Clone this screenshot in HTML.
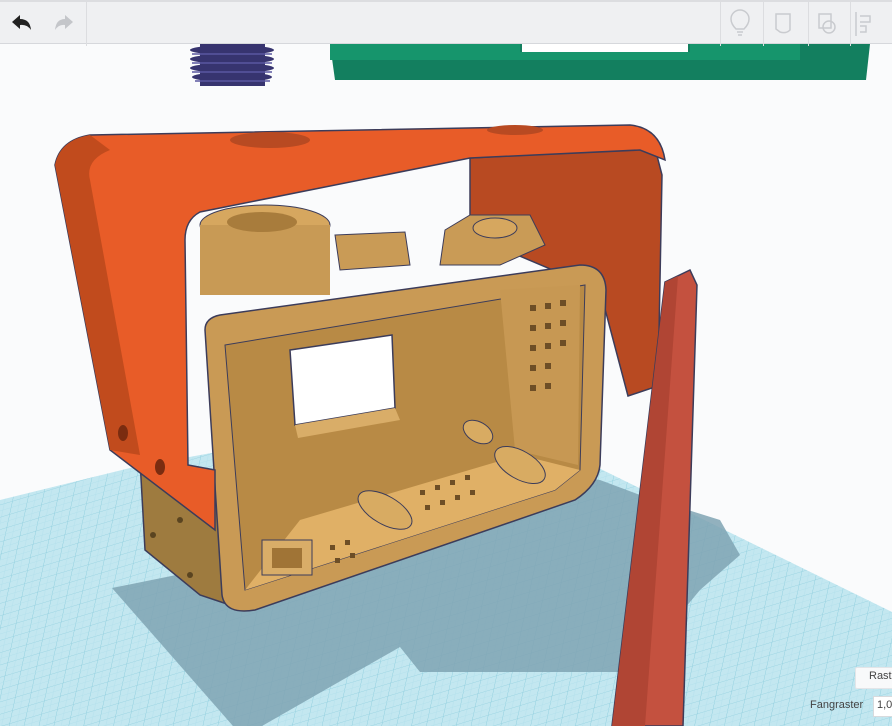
<!DOCTYPE html>
<html><head><meta charset="utf-8"><style>
html,body{margin:0;padding:0;width:892px;height:726px;overflow:hidden;background:#fafbfc;font-family:"Liberation Sans",sans-serif}
#tb{position:absolute;left:0;top:0;width:892px;height:44px;background:#eff0f2;border-top:2px solid #dcdde0;border-bottom:1px solid #d6d8dc;box-sizing:border-box}
.div{position:absolute;top:0;width:1px;height:44px;background:#dcdde0}
svg{position:absolute;left:0;top:0}
.lbl{position:absolute;font-size:11px;color:#444}
</style></head><body>
<svg width="892" height="726" viewBox="0 0 892 726">
<defs>
<pattern id="g" width="14" height="14" patternUnits="userSpaceOnUse" patternTransform="skewX(-30) rotate(-20)">
<rect width="14" height="14" fill="#c3e7f0"/><path d="M0 0H14M0 0V14" stroke="#8ccddd" stroke-width="0.8"/>
<path d="M0 7H14M7 0V14" stroke="#b0dfea" stroke-width="0.4"/></pattern>
</defs>
<polygon points="0,500 130,468 470,405 892,612 892,726 0,726" fill="url(#g)"/>
<!-- shadow -->
<polygon points="112,588 233,726 262,726 400,647 420,672 620,672 650,650 700,590 740,555 720,520 640,495 600,480 530,470 400,520 250,560" fill="#7fa3b3" opacity="0.85"/>
<!-- green piece -->
<polygon points="330,44 870,44 866,80 335,80" fill="#137f5f"/>
<polygon points="330,44 520,44 520,52 690,52 690,44 800,44 800,60 330,60" fill="#16956c"/>
<rect x="522" y="44" width="166" height="8" fill="#fff"/>
<!-- screw -->
<g fill="#37346f">
<ellipse cx="232" cy="50" rx="42" ry="5"/><ellipse cx="232" cy="59" rx="42" ry="5"/>
<ellipse cx="232" cy="68" rx="42" ry="5"/><ellipse cx="232" cy="77" rx="40" ry="5"/>
<rect x="200" y="44" width="65" height="42"/></g>
<g stroke="#5a57a0" stroke-width="1.5"><path d="M192 54H272M192 63H272M192 72H272M195 81H270"/></g>
<!-- right orange flap -->
<polygon points="470,158 655,148 662,175 658,386 628,396 600,290 470,235" fill="#b84a22" stroke="#3c3c5a" stroke-width="1.5"/>
<!-- tan box lower-left body -->
<polygon points="140,460 215,470 230,605 200,595 145,550" fill="#9e7b3f" stroke="#3c3c5a" stroke-width="1.5"/>
<circle cx="153" cy="535" r="3" fill="#5a4420"/><circle cx="190" cy="575" r="3" fill="#5a4420"/><circle cx="180" cy="520" r="3" fill="#5a4420"/>
<!-- tan box top features -->
<ellipse cx="265" cy="225" rx="65" ry="20" fill="#d6a75f" stroke="#3c3c5a"/>
<rect x="200" y="225" width="130" height="70" fill="#c89a55"/>
<ellipse cx="262" cy="222" rx="35" ry="10" fill="#a87c3c"/>
<polygon points="335,235 405,232 410,265 340,270" fill="#c99b56" stroke="#3c3c5a"/>
<polygon points="445,230 470,215 530,215 545,245 500,265 440,265" fill="#c99b56" stroke="#3c3c5a"/>
<ellipse cx="495" cy="228" rx="22" ry="10" fill="#d6a75f" stroke="#3c3c5a"/>
<!-- tan box -->
<path d="M205,330 Q205,318 220,315 L580,265 Q605,265 606,290 L600,465 Q598,485 575,500 L255,610 Q225,615 222,595 Z" fill="#c99a55" stroke="#3c3c5a" stroke-width="1.5"/>
<path d="M225,345 L585,285 L580,470 L555,490 L245,590 Z" fill="#b88a45" stroke="#3c3c5a"/>
<polygon points="500,290 580,285 578,465 515,450" fill="#c79853"/>
<polygon points="245,590 300,520 520,455 580,470 555,490" fill="#e0b066"/>
<polygon points="290,350 392,335 395,408 295,425" fill="#fff" stroke="#3c3c5a" stroke-width="1.5"/>
<polygon points="295,425 395,408 400,420 298,438" fill="#d9ad68"/>
<g fill="#6d4e26">
<rect x="530" y="305" width="6" height="6"/><rect x="545" y="303" width="6" height="6"/><rect x="560" y="300" width="6" height="6"/>
<rect x="530" y="325" width="6" height="6"/><rect x="545" y="323" width="6" height="6"/><rect x="560" y="320" width="6" height="6"/>
<rect x="530" y="345" width="6" height="6"/><rect x="545" y="343" width="6" height="6"/><rect x="560" y="340" width="6" height="6"/>
<rect x="530" y="365" width="6" height="6"/><rect x="545" y="363" width="6" height="6"/>
<rect x="530" y="385" width="6" height="6"/><rect x="545" y="383" width="6" height="6"/>
<rect x="420" y="490" width="5" height="5"/><rect x="435" y="485" width="5" height="5"/><rect x="450" y="480" width="5" height="5"/><rect x="465" y="475" width="5" height="5"/>
<rect x="425" y="505" width="5" height="5"/><rect x="440" y="500" width="5" height="5"/><rect x="455" y="495" width="5" height="5"/><rect x="470" y="490" width="5" height="5"/>
<rect x="330" y="545" width="5" height="5"/><rect x="345" y="540" width="5" height="5"/><rect x="335" y="558" width="5" height="5"/><rect x="350" y="553" width="5" height="5"/>
</g>
<ellipse cx="385" cy="510" rx="30" ry="14" fill="#d8ab62" stroke="#3c3c5a" transform="rotate(30 385 510)"/>
<ellipse cx="520" cy="465" rx="28" ry="14" fill="#d8ab62" stroke="#3c3c5a" transform="rotate(30 520 465)"/>
<ellipse cx="478" cy="432" rx="16" ry="10" fill="#d8ab62" stroke="#3c3c5a" transform="rotate(30 478 432)"/>
<rect x="262" y="540" width="50" height="35" fill="#d9ad68" stroke="#3c3c5a"/>
<rect x="272" y="548" width="30" height="20" fill="#a07436"/>
<!-- left orange flap + top band -->
<path d="M55,165 Q60,140 90,135 L630,125 Q660,128 665,160 L640,150 L470,158 L200,212 Q185,220 185,240 L188,465 L215,470 L215,530 L110,450 Z" fill="#e85c28" stroke="#3c3c5a" stroke-width="1.5"/>
<path d="M55,165 Q60,140 90,135 L110,150 Q85,160 90,180 L140,455 L110,450 Z" fill="#c14b1d"/>
<ellipse cx="270" cy="140" rx="40" ry="8" fill="#b84a22"/>
<ellipse cx="515" cy="130" rx="28" ry="5" fill="#b84a22"/>
<ellipse cx="123" cy="433" rx="5" ry="8" fill="#7a2c10"/>
<ellipse cx="160" cy="467" rx="5" ry="8" fill="#7a2c10"/>
<!-- red plate -->
<polygon points="665,282 690,270 697,285 683,726 612,726" fill="#c4513f" stroke="#3c3c5a" stroke-width="1.5"/>
<polygon points="665,282 678,276 645,726 612,726" fill="#b04534"/>
</svg>
<div id="tb">
<div class="div" style="left:86px"></div><div class="div" style="left:720px"></div><div class="div" style="left:763px"></div><div class="div" style="left:808px"></div><div class="div" style="left:850px"></div>
<svg width="892" height="44" style="position:absolute;left:0;top:0">
<path d="M12 20 L20 13 L20 17 Q30 17 31 28 Q27 22 20 23 L20 27 Z" fill="#222"/>
<path d="M73 20 L65 13 L65 17 Q56 17 55 28 Q59 22 65 23 L65 27 Z" fill="#c4c6ca"/>
<g fill="none" stroke="#c9cbcf" stroke-width="1.5">
<path d="M736 27 Q731 22 731 17 A9 9 0 0 1 749 17 Q749 22 744 27 Z M737 30H743M738 33H742"/>
<path d="M776 12H790V28 Q786 32 780 30 L776 27Z"/>
<rect x="819" y="12" width="12" height="14"/><circle cx="829" cy="25" r="6"/>
<path d="M856 10V34M860 14H870V20H860M860 24H866V30H860"/>
</g></svg>
</div>
<div style="position:absolute;left:855px;top:667px;width:40px;height:20px;background:#f8f9fa;border:1px solid #e3e5e8;border-radius:2px"></div>
<div class="lbl" style="left:869px;top:670px">Rast</div>
<div class="lbl" style="left:810px;top:699px">Fangraster</div>
<div style="position:absolute;left:873px;top:696px;width:30px;height:19px;background:#fff;border:1px solid #d8dadd"></div>
<div class="lbl" style="left:877px;top:699px">1,0</div>
</body></html>
